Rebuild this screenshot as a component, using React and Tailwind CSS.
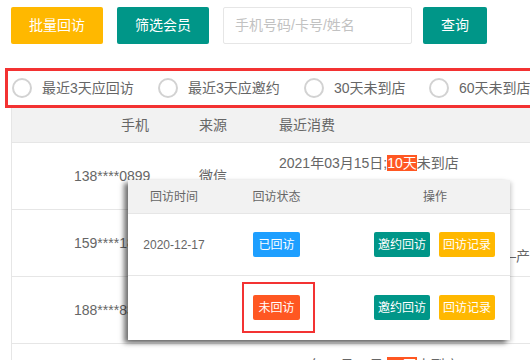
import React from "react";

const font = { fontFamily: '"Liberation Sans", "Noto Sans CJK SC", sans-serif' };

function Radio({ label, w }) {
  return (
    <div className="flex items-center shrink-0" style={{ width: w }}>
      <span className="w-[20px] h-[20px] rounded-full border-2 border-[#d2d2d2] bg-white shrink-0" />
      <span className="ml-[10px] text-[14px] text-[#666] whitespace-nowrap">{label}</span>
    </div>
  );
}

function Hl({ children }) {
  return <span className="bg-[#FF5722] text-white leading-[16px] inline-block">{children}</span>;
}

function SmallBtn({ color, w, children }) {
  return (
    <div
      className={`h-[25px] rounded-[2px] text-white text-[12px] flex items-center justify-center ${color} ${w}`}
    >
      {children}
    </div>
  );
}

export default function App() {
  return (
    <div className="relative w-[530px] h-[360px] overflow-hidden bg-white" style={font}>
      {/* Top bar */}
      <div className="flex items-center pt-[7px] pl-[11px]">
        <div className="w-[92px] h-[37px] rounded-[2px] bg-[#FFB800] text-white text-[14px] flex items-center justify-center">批量回访</div>
        <div className="ml-[14px] w-[92px] h-[37px] rounded-[2px] bg-[#009688] text-white text-[14px] flex items-center justify-center">筛选会员</div>
        <div className="ml-[14px] w-[189px] h-[37px] rounded-[2px] border border-[#e6e6e6] text-[14px] text-[#c2c2c2] flex items-center pl-[11px]">手机号码/卡号/姓名</div>
        <div className="ml-[11px] w-[64px] h-[37px] rounded-[2px] bg-[#009688] text-white text-[14px] flex items-center justify-center">查询</div>
      </div>

      {/* Radio filter (highlighted) */}
      <div className="mt-[24px] ml-[5px] w-[560px] h-[40px] border-[3px] border-[#f33232] flex items-center pl-[4px]">
        <Radio label="最近3天应回访" w={146} />
        <Radio label="最近3天应邀约" w={146} />
        <Radio label="30天未到店" w={125} />
        <Radio label="60天未到店" w={125} />
      </div>

      {/* Table */}
      <div className="ml-[11px] border-l border-[#e6e6e6] text-[14px] text-[#666]">
        <div className="h-[35px] bg-[#f2f2f2] border-b border-[#e6e6e6] flex items-center">
          <span className="ml-[109px] w-[78px]">手机</span>
          <span className="w-[80px]">来源</span>
          <span>最近消费</span>
        </div>
        <div className="h-[67px] border-b border-[#e6e6e6] flex items-center">
          <span className="ml-[62px] w-[125px] whitespace-nowrap">138****0899</span>
          <span className="w-[80px] whitespace-nowrap">微信</span>
          <div className="flex flex-col leading-[26px] whitespace-nowrap">
            <span>2021年03月15日;<Hl>10天</Hl>未到店</span>
            <span>消费&nbsp;</span>
          </div>
        </div>
        <div className="h-[67px] border-b border-[#e6e6e6] flex items-center">
          <span className="ml-[62px] w-[125px] whitespace-nowrap">159****1808</span>
          <span className="w-[80px] whitespace-nowrap">微信</span>
          <div className="flex flex-col leading-[26px] whitespace-nowrap">
            <span>2021年03月20日;<Hl>10天</Hl>未到店</span>
            <span className="pl-[232px]">—产</span>
          </div>
        </div>
        <div className="h-[67px] border-b border-[#e6e6e6] flex items-center">
          <span className="ml-[62px] w-[125px] whitespace-nowrap">188****8321</span>
          <span className="w-[80px] whitespace-nowrap">微信</span>
          <div className="flex flex-col leading-[26px] whitespace-nowrap">
            <span>2021年03月22日;<Hl>12天</Hl>未到店</span>
            <span>&nbsp;</span>
          </div>
        </div>
        <div className="h-[67px] flex items-center">
          <span className="ml-[62px] w-[125px] whitespace-nowrap">186****2201</span>
          <span className="w-[80px] whitespace-nowrap">微信</span>
          <div className="flex flex-col leading-[26px] whitespace-nowrap">
            <span>2021年03月24日;<Hl>16天</Hl>未到店</span>
            <span>&nbsp;</span>
          </div>
        </div>
      </div>

      {/* Popup */}
      <div className="absolute left-[128px] top-[180px] w-[382px] h-[160px] bg-white text-[12px] text-[#666] shadow-[-4px_3px_5px_rgba(0,0,0,0.55),2px_2px_4px_rgba(0,0,0,0.15)]">
        <div className="h-[34px] bg-[#f2f2f2] border-b border-[#e6e6e6] flex items-center">
          <span className="w-[92px] text-center">回访时间</span>
          <span className="w-[113px] text-center">回访状态</span>
          <span className="ml-[90px]">操作</span>
        </div>
        <div className="h-[62px] border-b border-[#e6e6e6] flex items-center">
          <span className="w-[92px] text-center">2020-12-17</span>
          <div className="w-[113px] flex justify-center">
            <SmallBtn color="bg-[#1E9FFF]" w="w-[47px]">已回访</SmallBtn>
          </div>
          <div className="ml-[41px] flex gap-[9px]">
            <SmallBtn color="bg-[#009688]" w="w-[56px]">邀约回访</SmallBtn>
            <SmallBtn color="bg-[#FFB800]" w="w-[56px]">回访记录</SmallBtn>
          </div>
        </div>
        <div className="relative h-[63px] flex items-center">
          <span className="w-[92px] text-center"></span>
          <div className="w-[113px] flex justify-center">
            <SmallBtn color="bg-[#FF5722]" w="w-[47px]">未回访</SmallBtn>
          </div>
          <div className="ml-[41px] flex gap-[9px]">
            <SmallBtn color="bg-[#009688]" w="w-[56px]">邀约回访</SmallBtn>
            <SmallBtn color="bg-[#FFB800]" w="w-[56px]">回访记录</SmallBtn>
          </div>
          <div className="absolute left-[114px] top-[6px] w-[73px] h-[51px] border-2 border-[#f33232]" />
        </div>
      </div>
    </div>
  );
}
